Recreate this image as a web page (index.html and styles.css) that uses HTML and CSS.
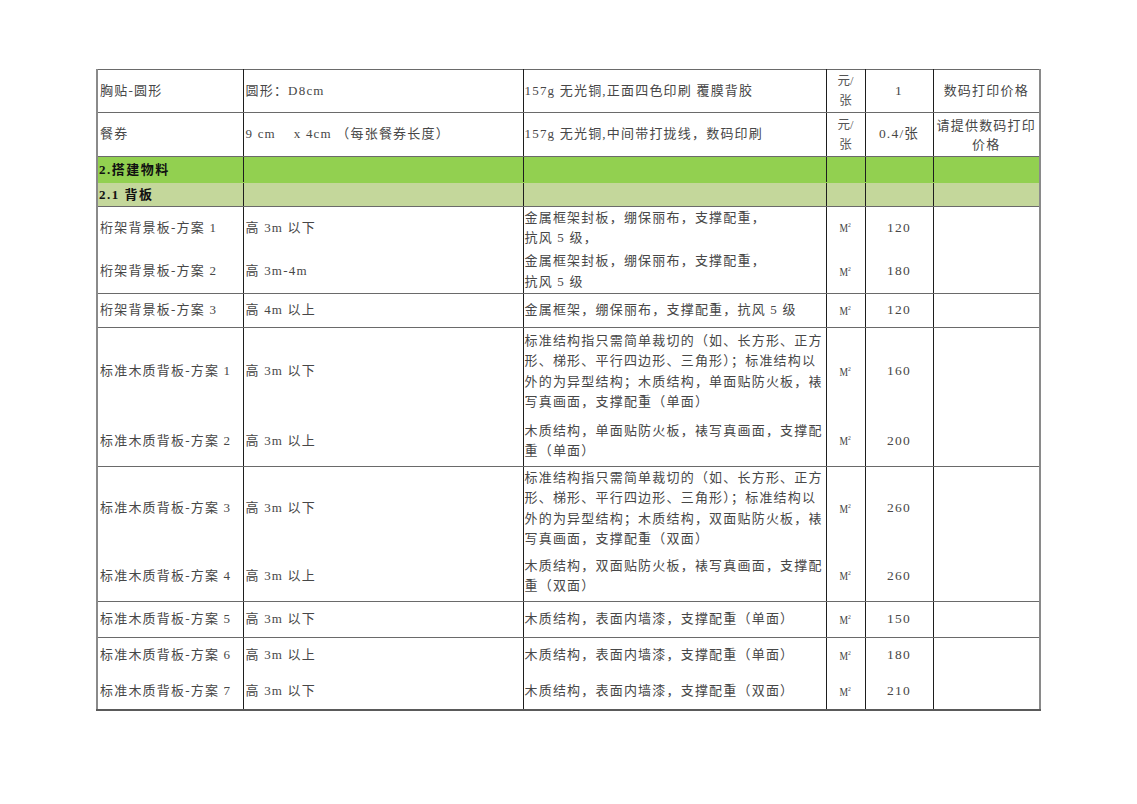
FILE: index.html
```html
<!DOCTYPE html>
<html lang="zh-CN">
<head>
<meta charset="utf-8">
<title>报价表</title>
<link rel="stylesheet" href="styles.css">
</head>
<body>
<div class="page">
<table class="sheet">
  <colgroup>
    <col class="w-name">
    <col class="w-spec">
    <col class="w-desc">
    <col class="w-unit">
    <col class="w-price">
    <col class="w-note">
  </colgroup>
  <tbody>
    <tr class="h43">
      <td class="name">胸贴-圆形</td>
      <td class="spec">圆形：D8cm</td>
      <td class="desc">157g 无光铜,正面四色印刷 覆膜背胶</td>
      <td class="unit">元/<br>张</td>
      <td class="price">1</td>
      <td class="note">数码打印价格</td>
    </tr>
    <tr class="h44">
      <td class="name">餐券</td>
      <td class="spec">9 cm&nbsp;&nbsp;&nbsp; x 4cm （每张餐券长度）</td>
      <td class="desc">157g 无光铜,中间带打拢线，数码印刷</td>
      <td class="unit">元/<br>张</td>
      <td class="price">0.4/张</td>
      <td class="note note-wrap">请提供数码打印<br>价格</td>
    </tr>
    <tr class="sec1">
      <td class="name bold">2.搭建物料</td>
      <td></td><td></td><td></td><td></td><td></td>
    </tr>
    <tr class="sec2">
      <td class="name bold">2.1 背板</td>
      <td></td><td></td><td></td><td></td><td></td>
    </tr>
    <tr class="h43 open">
      <td class="name">桁架背景板-方案 1</td>
      <td class="spec">高 3m 以下</td>
      <td class="desc">金属框架封板，绷保丽布，支撑配重，<br>抗风 5 级，</td>
      <td class="unit"><span class="m">M<sup>2</sup></span></td>
      <td class="price">120</td>
      <td class="note"></td>
    </tr>
    <tr class="h44">
      <td class="name">桁架背景板-方案 2</td>
      <td class="spec">高 3m-4m</td>
      <td class="desc">金属框架封板，绷保丽布，支撑配重，<br>抗风 5 级</td>
      <td class="unit"><span class="m">M<sup>2</sup></span></td>
      <td class="price">180</td>
      <td class="note"></td>
    </tr>
    <tr class="h34">
      <td class="name">桁架背景板-方案 3</td>
      <td class="spec">高 4m 以上</td>
      <td class="desc">金属框架，绷保丽布，支撑配重，抗风 5 级</td>
      <td class="unit"><span class="m">M<sup>2</sup></span></td>
      <td class="price">120</td>
      <td class="note"></td>
    </tr>
    <tr class="h88 open">
      <td class="name">标准木质背板-方案 1</td>
      <td class="spec">高 3m 以下</td>
      <td class="desc">标准结构指只需简单裁切的（如、长方形、正方<br>形、梯形、平行四边形、三角形）；标准结构以<br>外的为异型结构；木质结构，单面贴防火板，裱<br>写真画面，支撑配重（单面）</td>
      <td class="unit"><span class="m">M<sup>2</sup></span></td>
      <td class="price">160</td>
      <td class="note"></td>
    </tr>
    <tr class="h51">
      <td class="name">标准木质背板-方案 2</td>
      <td class="spec">高 3m 以上</td>
      <td class="desc">木质结构，单面贴防火板，裱写真画面，支撑配<br>重（单面）</td>
      <td class="unit"><span class="m">M<sup>2</sup></span></td>
      <td class="price">200</td>
      <td class="note"></td>
    </tr>
    <tr class="h84 open">
      <td class="name">标准木质背板-方案 3</td>
      <td class="spec">高 3m 以下</td>
      <td class="desc">标准结构指只需简单裁切的（如、长方形、正方<br>形、梯形、平行四边形、三角形）；标准结构以<br>外的为异型结构；木质结构，双面贴防火板，裱<br>写真画面，支撑配重（双面）</td>
      <td class="unit"><span class="m">M<sup>2</sup></span></td>
      <td class="price">260</td>
      <td class="note"></td>
    </tr>
    <tr class="h51">
      <td class="name">标准木质背板-方案 4</td>
      <td class="spec">高 3m 以上</td>
      <td class="desc">木质结构，双面贴防火板，裱写真画面，支撑配<br>重（双面）</td>
      <td class="unit"><span class="m">M<sup>2</sup></span></td>
      <td class="price">260</td>
      <td class="note"></td>
    </tr>
    <tr class="h36">
      <td class="name">标准木质背板-方案 5</td>
      <td class="spec">高 3m 以下</td>
      <td class="desc">木质结构，表面内墙漆，支撑配重（单面）</td>
      <td class="unit"><span class="m">M<sup>2</sup></span></td>
      <td class="price">150</td>
      <td class="note"></td>
    </tr>
    <tr class="h36 open">
      <td class="name">标准木质背板-方案 6</td>
      <td class="spec">高 3m 以上</td>
      <td class="desc">木质结构，表面内墙漆，支撑配重（单面）</td>
      <td class="unit"><span class="m">M<sup>2</sup></span></td>
      <td class="price">180</td>
      <td class="note"></td>
    </tr>
    <tr class="h36">
      <td class="name">标准木质背板-方案 7</td>
      <td class="spec">高 3m 以下</td>
      <td class="desc">木质结构，表面内墙漆，支撑配重（双面）</td>
      <td class="unit"><span class="m">M<sup>2</sup></span></td>
      <td class="price">210</td>
      <td class="note"></td>
    </tr>
  </tbody>
</table>
</div>
</body>
</html>
```

FILE: styles.css
```css
html, body {
  margin: 0;
  padding: 0;
  background: #ffffff;
}

body {
  font-family: "Liberation Serif", "Noto Sans CJK SC", serif;
}

.page {
  padding: 69px 0 0 96px;
}

.sheet {
  border-collapse: collapse;
  table-layout: fixed;
  width: 943px;
  font-size: 13px;
  letter-spacing: 1.2px;
  color: #474747;
}

.w-name { width: 146px; }
.w-spec { width: 280px; }
.w-desc { width: 303px; }
.w-unit { width: 39px; }
.w-price { width: 68px; }
.w-note { width: 107px; }

.sheet td {
  border-top: 1px solid #6a6a6a;
  border-bottom: 1px solid #6a6a6a;
  border-left: 1px solid #1e1e1e;
  border-right: 1px solid #1e1e1e;
  padding: 0 0 0 2px;
  vertical-align: middle;
  white-space: nowrap;
  line-height: 20.5px;
  overflow: hidden;
}

.sheet td:first-child {
  border-left: 2px solid #8a8a8a;
}

.sheet td:last-child {
  border-right: 2px solid #8a8a8a;
}

.sheet tr:first-child td {
  border-top: 1px solid #6a6a6a;
}

.sheet tr:last-child td {
  border-bottom: 2px solid #5a5a5a;
}

.sheet td.spec {
  padding-left: 2px;
}

.sheet td.desc {
  padding-left: 1px;
}

.sheet td.unit,
.sheet td.price,
.sheet td.note {
  text-align: center;
  padding: 0;
}

.sheet td.price {
  font-size: 13.5px;
}

.sheet td.unit {
  line-height: 20px;
  letter-spacing: 0;
  font-size: 12.5px;
  color: #555555;
}

.m {
  display: inline-block;
  font-size: 12px;
  transform: scaleX(0.8);
  color: #444444;
}

.m sup {
  font-size: 7px;
  vertical-align: 5px;
  line-height: 0;
}

.sheet td.note-wrap {
  line-height: 19px;
}

.sheet tr.open td {
  border-bottom: 1px solid transparent;
}

.h34 td { height: 33px; }
.h36 td { height: 35px; }
.h43 td { height: 42px; }
.h44 td { height: 43px; }
.h51 td { height: 50px; }
.h84 td { height: 83px; }
.h88 td { height: 87px; }

.sec1 td {
  background: #92d050;
  height: 25px;
  border-bottom: 1px solid #92d050;
  line-height: 20px;
}

.sec2 td {
  background: #c4d79b;
  height: 23px;
  line-height: 20px;
}

.sheet td.bold {
  font-weight: 700;
  color: #111111;
  letter-spacing: 1.5px;
  padding-left: 1px;
}
```
